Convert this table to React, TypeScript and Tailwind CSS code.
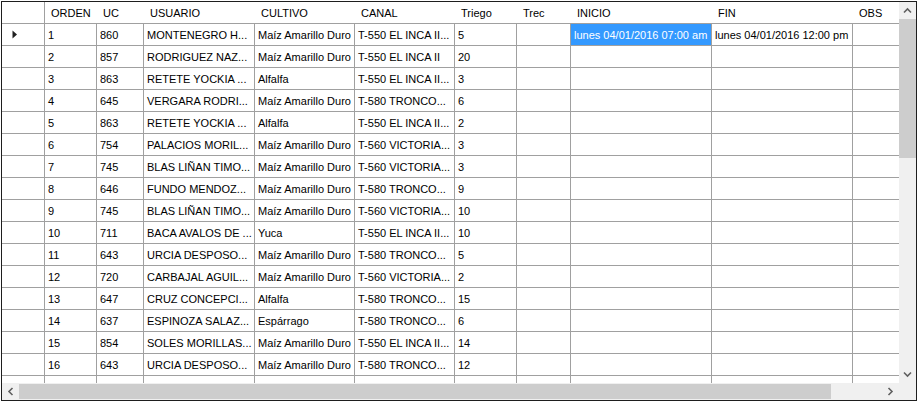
import React from 'react'

const cols = [
  { title: 'ORDEN', w: 'w-[52px]' },
  { title: 'UC', w: 'w-[47px]' },
  { title: 'USUARIO', w: 'w-[111px]' },
  { title: 'CULTIVO', w: 'w-[100px]' },
  { title: 'CANAL', w: 'w-[100px]' },
  { title: 'Triego', w: 'w-[62px]' },
  { title: 'Trec', w: 'w-[54px]' },
  { title: 'INICIO', w: 'w-[141px]' },
  { title: 'FIN', w: 'w-[141px]' },
  { title: 'OBS', w: 'w-[60px]' },
]

const MAIZ = 'Maíz Amarillo Duro'

const rows: string[][] = [
  ['1', '860', 'MONTENEGRO H...', MAIZ, 'T-550 EL INCA II...', '5', '', 'lunes 04/01/2016 07:00 am', 'lunes 04/01/2016 12:00 pm', ''],
  ['2', '857', 'RODRIGUEZ NAZ...', MAIZ, 'T-550 EL INCA II', '20'],
  ['3', '863', 'RETETE YOCKIA ...', 'Alfalfa', 'T-550 EL INCA II...', '3'],
  ['4', '645', 'VERGARA RODRI...', MAIZ, 'T-580 TRONCO...', '6'],
  ['5', '863', 'RETETE YOCKIA ...', 'Alfalfa', 'T-550 EL INCA II...', '2'],
  ['6', '754', 'PALACIOS MORIL...', MAIZ, 'T-560 VICTORIA...', '3'],
  ['7', '745', 'BLAS LIÑAN TIMO...', MAIZ, 'T-560 VICTORIA...', '3'],
  ['8', '646', 'FUNDO MENDOZ...', MAIZ, 'T-580 TRONCO...', '9'],
  ['9', '745', 'BLAS LIÑAN TIMO...', MAIZ, 'T-560 VICTORIA...', '10'],
  ['10', '711', 'BACA AVALOS DE ...', 'Yuca', 'T-550 EL INCA II...', '10'],
  ['11', '643', 'URCIA DESPOSO...', MAIZ, 'T-580 TRONCO...', '5'],
  ['12', '720', 'CARBAJAL AGUIL...', MAIZ, 'T-560 VICTORIA...', '2'],
  ['13', '647', 'CRUZ CONCEPCI...', 'Alfalfa', 'T-580 TRONCO...', '15'],
  ['14', '637', 'ESPINOZA SALAZ...', 'Espárrago', 'T-580 TRONCO...', '6'],
  ['15', '854', 'SOLES MORILLAS...', MAIZ, 'T-550 EL INCA II...', '14'],
  ['16', '643', 'URCIA DESPOSO...', MAIZ, 'T-580 TRONCO...', '12'],
  ['17', '814', 'URCIA DESPOSO...', MAIZ, 'T-560 VICTORIA...', '5'],
]

function Chevron({ dir }: { dir: 'up' | 'down' | 'left' | 'right' }) {
  const rot = { up: 0, right: 90, down: 180, left: 270 }[dir]
  return (
    <svg width="9" height="9" viewBox="0 0 9 9" style={{ transform: `rotate(${rot}deg)` }}>
      <path d="M1 6.5 L4.5 3 L8 6.5" fill="none" stroke="#606060" strokeWidth="1.6" />
    </svg>
  )
}

export default function App() {
  return (
    <div className="bg-white w-[920px] h-[402px] pt-px pl-px" style={{ fontFamily: '"Liberation Sans", Arial, sans-serif' }}>
      <div className="w-[916px] h-[400px] border border-[#1e1e1e] flex flex-col text-[11px] text-black">
        <div className="flex flex-1 min-h-0">
          {/* grid */}
          <div className="flex-1 overflow-hidden">
            <div className="flex h-[22px] border-b border-[#a0a0a0] whitespace-nowrap">
              <div className="w-[43px] shrink-0 border-r border-[#a0a0a0]" />
              {cols.map(c => (
                <div key={c.title} className={`${c.w} shrink-0 pl-[6px] pt-px leading-[21px] overflow-hidden`}>{c.title}</div>
              ))}
            </div>
            {rows.map((r, i) => (
              <div key={i} className="flex h-[22px] border-b border-[#a0a0a0] whitespace-nowrap">
                <div className="w-[43px] shrink-0 border-r border-[#a0a0a0] flex items-center pl-[10px]">
                  {i === 0 && (
                    <svg width="6" height="9" viewBox="0 0 6 9">
                      <path d="M0.5 0.5 L5 4.5 L0.5 8.5 Z" fill="#202020" />
                    </svg>
                  )}
                </div>
                {cols.map((c, j) => {
                  const selected = i === 0 && j === 7
                  return (
                    <div
                      key={j}
                      className={`${c.w} shrink-0 border-r border-[#a0a0a0] pl-[3px] leading-[22px] overflow-hidden ${selected ? 'bg-[#3399ff] text-white' : ''}`}
                    >
                      {r[j] ?? ''}
                    </div>
                  )
                })}
              </div>
            ))}
          </div>
          {/* vertical scrollbar */}
          <div className="w-[17px] shrink-0 bg-[#f0f0f0] flex flex-col">
            <div className="h-[17px] flex items-center justify-center"><Chevron dir="up" /></div>
            <div className="flex-1 flex flex-col">
              <div className="h-[139px] bg-[#cdcdcd]" />
            </div>
            <div className="h-[17px] flex items-center justify-center"><Chevron dir="down" /></div>
          </div>
        </div>
        <div className="flex h-[17px] shrink-0">
          <div className="flex-1 bg-[#f0f0f0] flex items-center">
            <div className="w-[17px] h-[17px] flex items-center justify-center"><Chevron dir="left" /></div>
            <div className="w-[812px] h-[15px] bg-[#cdcdcd]" />
            <div className="flex-1" />
            <div className="w-[17px] h-[17px] flex items-center justify-center"><Chevron dir="right" /></div>
          </div>
          <div className="w-[17px] shrink-0 bg-[#f0f0f0]" />
        </div>
      </div>
    </div>
  )
}
